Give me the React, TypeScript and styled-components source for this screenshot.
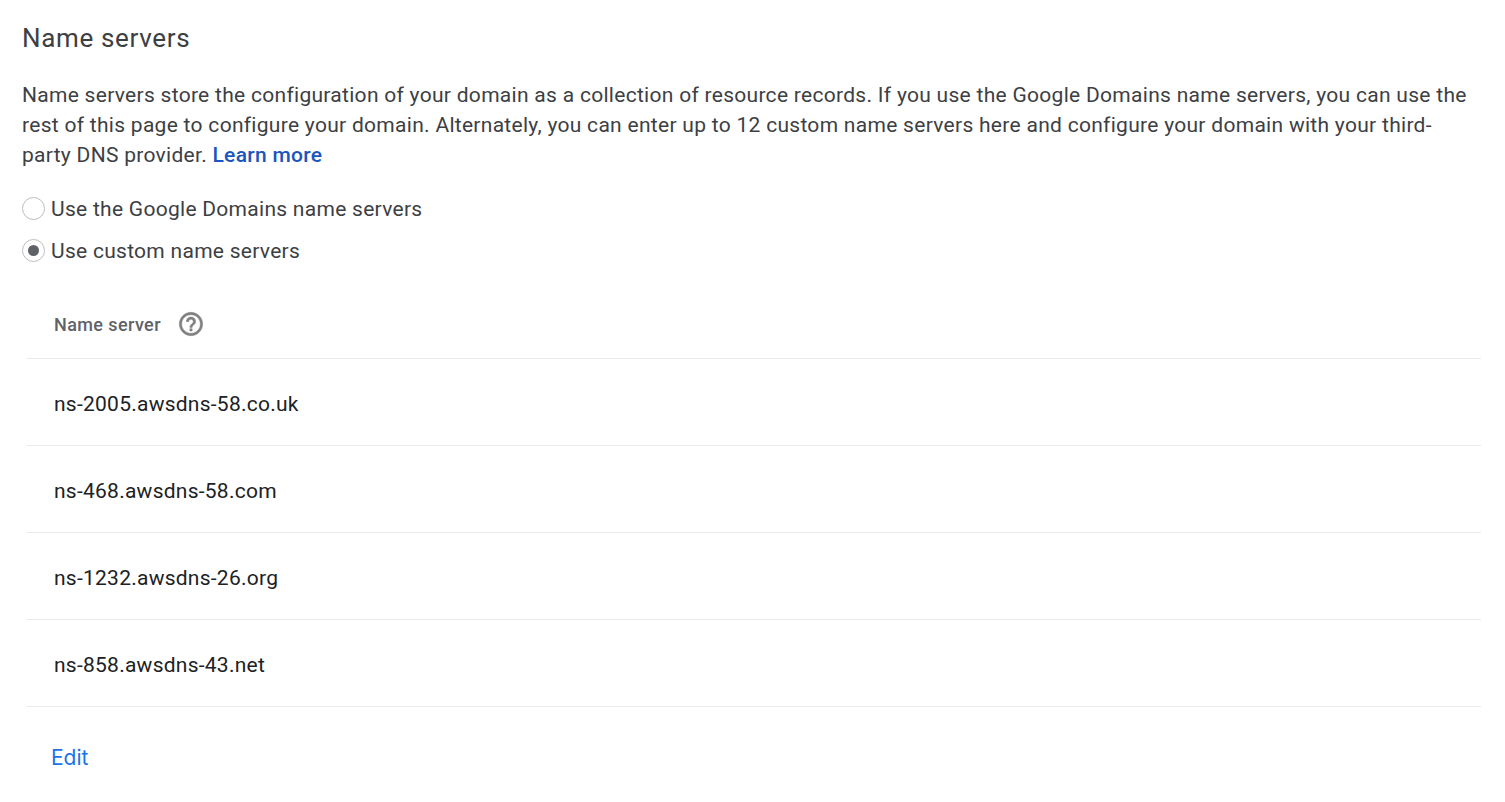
import { createGlobalStyle } from 'styled-components';
import styled from 'styled-components';

const GlobalStyle = createGlobalStyle`
  html, body {
    margin: 0;
    padding: 0;
    background: #fff;
  }
  body {
    font-family: Roboto, "Liberation Sans", sans-serif;
    color: #3c4043;
  }
`;

const NAME_SERVERS = [
  'ns-2005.awsdns-58.co.uk',
  'ns-468.awsdns-58.com',
  'ns-1232.awsdns-26.org',
  'ns-858.awsdns-43.net',
];

const Page = styled.div`
  width: 1505px;
  height: 802px;
  box-sizing: border-box;
  padding: 21px 24px 0 22px;
  overflow: hidden;
`;

const Title = styled.h2`
  margin: 0;
  font-size: 26px;
  line-height: 34px;
  font-weight: 400;
  letter-spacing: 0.65px;
  color: #3c4043;
`;

const Intro = styled.p`
  margin: 25px 6px 0 0;
  font-size: 21px;
  line-height: 30px;
  letter-spacing: 0.29px;
  color: #3c4043;
`;

const Link = styled.a`
  color: #1a56bd;
  font-weight: 500;
  text-decoration: none;
`;

const RadioGroup = styled.div`
  margin-top: 24px;
  display: flex;
  flex-direction: column;
  gap: 12px;
`;

const RadioRow = styled.label`
  display: flex;
  align-items: center;
  gap: 6px;
  height: 30px;
  font-size: 21px;
  letter-spacing: 0.28px;
`;

const RadioCircle = styled.span<{ $checked?: boolean }>`
  width: 23px;
  height: 23px;
  margin-bottom: 2px;
  box-sizing: border-box;
  border: 1px solid #bdbdbd;
  border-radius: 50%;
  display: flex;
  align-items: center;
  justify-content: center;

  &::after {
    content: '';
    display: ${(p) => (p.$checked ? 'block' : 'none')};
    width: 11px;
    height: 11px;
    border-radius: 50%;
    background: #5f6368;
  }
`;

const Table = styled.div`
  margin: 14px 0 0 5px;
`;

const HeaderRow = styled.div`
  display: flex;
  align-items: center;
  gap: 16px;
  height: 79px;
  padding: 10px 0 0 27px;
  border-bottom: 1px solid #e8eaed;
  box-sizing: border-box;
  font-size: 18px;
  font-weight: 500;
  letter-spacing: 0.4px;
  color: #5f6368;
`;

const HelpIcon = styled.svg`
  width: 28px;
  height: 28px;
  fill: #808080;
  stroke: #808080;
  stroke-width: 0.4;
`;

const Row = styled.div`
  display: flex;
  align-items: center;
  height: 87px;
  padding: 4px 0 0 27px;
  border-bottom: 1px solid #e8eaed;
  box-sizing: border-box;
  font-size: 21px;
  letter-spacing: 0.25px;
  color: #202124;
`;

const EditButton = styled.button`
  margin: 36px 0 0 29px;
  padding: 0;
  border: 0;
  background: none;
  font-family: Inter, Roboto, sans-serif;
  font-size: 21px;
  line-height: 30px;
  color: #1a73e8;
`;

export default function App() {
  return (
    <Page>
      <GlobalStyle />
      <Title>Name servers</Title>
      <Intro>
        Name servers store the configuration of your domain as a collection of resource records. If you use the Google
        Domains name servers, you can use the rest of this page to configure your domain. Alternately, you can enter up
        to 12 custom name servers here and configure your domain with your third-party DNS provider.{' '}
        <Link href="#">Learn more</Link>
      </Intro>
      <RadioGroup>
        <RadioRow>
          <RadioCircle />
          Use the Google Domains name servers
        </RadioRow>
        <RadioRow>
          <RadioCircle $checked />
          Use custom name servers
        </RadioRow>
      </RadioGroup>
      <Table>
        <HeaderRow>
          Name server
          <HelpIcon viewBox="0 0 24 24">
            <path d="M11 18h2v-2h-2v2zm1-16C6.48 2 2 6.48 2 12s4.48 10 10 10 10-4.48 10-10S17.52 2 12 2zm0 18c-4.41 0-8-3.59-8-8s3.59-8 8-8 8 3.59 8 8-3.59 8-8 8zm0-14c-2.21 0-4 1.79-4 4h2c0-1.1.9-2 2-2s2 .9 2 2c0 2-3 1.75-3 5h2c0-2.25 3-2.5 3-5 0-2.21-1.79-4-4-4z" />
          </HelpIcon>
        </HeaderRow>
        {NAME_SERVERS.map((ns) => (
          <Row key={ns}>{ns}</Row>
        ))}
      </Table>
      <EditButton>Edit</EditButton>
    </Page>
  );
}
